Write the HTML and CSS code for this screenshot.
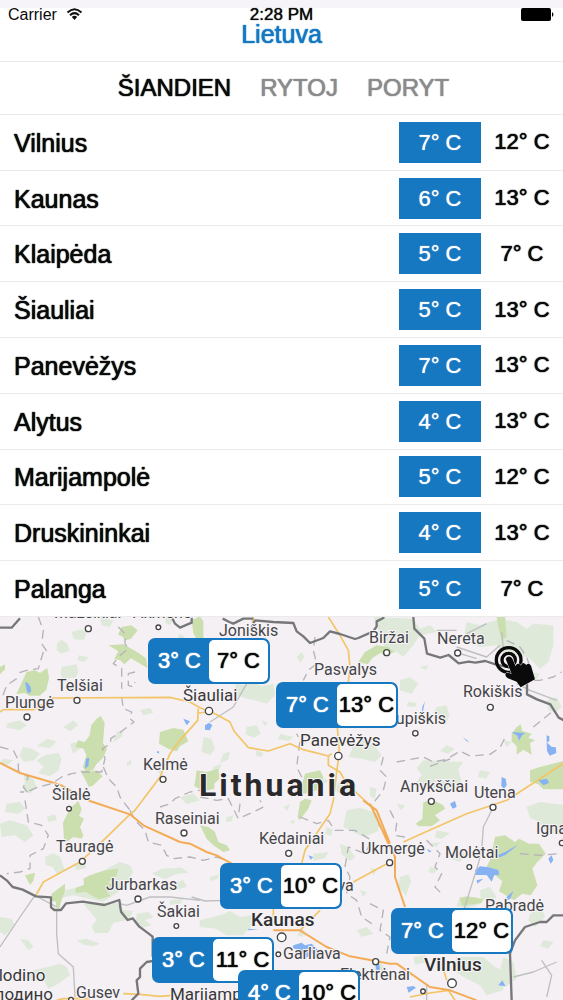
FILE: index.html
```html
<!DOCTYPE html>
<html lang="lt">
<head>
    <meta charset="UTF-8">
    <meta name="viewport" content="width=device-width, initial-scale=1.0">
    <title>Orai - Lietuva</title>
    <link rel="stylesheet" href="styles.css">
</head>
<body>
    <header>
        <div class="status-bar">
            <span class="carrier">Carrier
                <svg class="wifi" viewBox="0 0 16 12" aria-hidden="true">
                    <path d="M1 4.500Q8 -2 15 4.500M3.500 7.200Q8 3 12.500 7.200" />
                    <path class="wifi-dot" d="M5.300 9Q8 6.500 10.700 9L8 12z" />
                </svg>
            </span>
            <time>2:28 PM</time>
            <svg class="battery" viewBox="0 0 34 13" aria-hidden="true">
                <rect x="0" y="0" width="30" height="13" rx="2" />
                <path d="M31 4q3 2.500 0 5z" />
            </svg>
        </div>
        <h1>Lietuva</h1>
    </header>

    <nav>
        <a class="active" href="#siandien">ŠIANDIEN</a>
        <a href="#rytoj">RYTOJ</a>
        <a href="#poryt">PORYT</a>
    </nav>

    <table class="cities">
        <tbody>
            <tr><th scope="row">Vilnius</th><td><span class="min">7° C</span></td><td>12° C</td></tr>
            <tr><th scope="row">Kaunas</th><td><span class="min">6° C</span></td><td>13° C</td></tr>
            <tr><th scope="row">Klaipėda</th><td><span class="min">5° C</span></td><td>7° C</td></tr>
            <tr><th scope="row">Šiauliai</th><td><span class="min">5° C</span></td><td>13° C</td></tr>
            <tr><th scope="row">Panevėžys</th><td><span class="min">7° C</span></td><td>13° C</td></tr>
            <tr><th scope="row">Alytus</th><td><span class="min">4° C</span></td><td>13° C</td></tr>
            <tr><th scope="row">Marijampolė</th><td><span class="min">5° C</span></td><td>12° C</td></tr>
            <tr><th scope="row">Druskininkai</th><td><span class="min">4° C</span></td><td>13° C</td></tr>
            <tr><th scope="row">Palanga</th><td><span class="min">5° C</span></td><td>7° C</td></tr>
        </tbody>
    </table>

    <main class="map">
        <!-- Terrain is drawn at three units per pixel -->
        <svg class="terrain" viewBox="0 20 1689 1150" preserveAspectRatio="xMinYMin slice" aria-hidden="true">
            <g class="meadow">
                <path d="M215 65l30-8 15 10-8 22-30-2zM170 100l15-12 18 12 5 22-25 8-12-10zM235 135l30 5-12 15-20-5zM185 170l45-8 5 25-8 15-40 3-5-15zM20 340l40-10 20 15-20 15-40-8zM70 410l25 5 25 15-18 20-30 5-15-20zM140 385l30 8-20 20-40-5zM10 445l30 5-20 15-25-3zM110 450l25-15 40-8 10 20-10 35-25 15-35-8 15-20zM190 350l30-20 15 15-25 18zM210 400l20-5 10 20-20 15zM70 490l30 15 10 25-20 20-20-8 5-25z" />
                <path d="M420 300l30-8 10 15-30 8zM350 365l20-5-5 20-25 15zM380 455l12-6 3 12-14 5zM300 20l40 10-10 20-25-5zM540 70l15 10-10 15-15-5zM500 10l20 15-10 20-15-8zM480 470l15 5-10 15-12-3zM540 560l40-10 20 20-40 12zM555 120l12 10-5 10z" />
                <path d="M705 220l30 5 20-12 30 15 35-8 5 35-25 25-35-10-25-5-30-10zM890 140l15-15 8 15-12 18zM610 380l25 5 10 30-15 20-25-10zM740 350l30-5 12 25-20 12-25-10zM785 330l18 8-8 10zM840 370l40 10-15 12-30-5zM670 430l20-8-5 25-25 12zM640 470l25-10-10 25-20 5zM770 420l20 8-5 12-18-5zM1060 400l40-15 30 30 15 20-20 20-40-10-40-5 10-20zM960 500l25 10-15 15-20-5zM1010 520l40-10 20 20-30 25-30-10zM1110 530l20 5-5 30-15-8z" />
                <path d="M1120 20l120 5 20 30 30-10 20 20-50 10-20 30-30 35-20-15-30 5-20-60zM1200 210l30-10 25 20-20 30-35-10zM1260 170l25-5-8 15zM1310 290l30-5 8 30-12 30-20-8-20-22zM1225 275l25 3-5 12-25-3zM1400 35l40 10 60-20 50 10 30 20 20-15 60 5v60l-15 50-25 20-30-30-30-10-50-5-20-25-50 5-50-20zM1590 185l30 5-15 20zM1640 270l30-10 15 30-20 18-20-8zM1340 405l25 10-20 15-25-8zM1270 450l120 5-15 20 10 40-20 20-50 3-30-15-40 0 20-30-15-20zM1440 480l30 5-12 20-25-5zM1510 390l25 5-15 15zM1180 260l15-5-5 20z" />
                <path d="M20 580l40-5 15 20-20 15-40-5zM0 640l30-10 50 15 20 30-25 20-30-20-40 5zM140 620l25-8 5 18-25 5zM135 740l25-12 20 12 15 40-25 10-12-20-20-5zM220 760l30-3 10 15-30 8zM320 775l40-20 30 10 10 20-30 50-60 40-90-20-50 10 5-20 60-15 60-5 30-20zM250 880l100-2 20 20 30 5-15 25-45 10-15 30-40 0-10-20 15-20zM230 990l30-5 40 15-20 8-30-5zM0 920l35 5 10 20-30 30-15-10zM60 985l25 5 15 20-15 10zM80 1085l60-15 40-10 20 10 10 25-35 25-30 15-10-20-50-5zM410 910l35-5 15 15-25 10 20 15-30 8-20-10zM455 790l30-15 60-3 20 15-40 5-30 15zM480 830l70-20 10 20-60 15zM510 870l40-5-10 15-30 3z" />
                <path d="M600 930l70-18 20-10 30 18 35-5 8 25-35 35-50 0-30-20-50-5zM680 780l30-5-5 15zM630 800l30-8-10 15-20 5zM680 620l20-5-5 18-18 3zM850 590l20-8-8 20zM870 635l15-8-5 15zM980 650l18 8-5 18-18-5zM940 730l45-5-10 18-35 8zM1020 700l25 10 20 30-15 12-25-20zM1000 850l25 5-10 20-20-5zM1080 840l20 5-10 15zM1040 600l40-8 60 20-5 50-45 18-60-30zM1070 960l30-10 20 20-35 10zM600 1010l30 5-20 15-25-8zM900 955l15 5-8 20-15-5zM1110 770l20 10-10 15z" />
                <path d="M1190 580l25 5-12 15zM1580 590l40-15 70 8v90l-45-5-30-35-25-10zM1200 800l25-8 8 20-15 45-12-15-12-15zM1290 700l30-5-10 15zM1290 770l25 5-15 15-15-5zM1310 660l40 8-25 18-20-5zM1360 720l25-5 10 20-15 20-25-8zM1440 840l30-10 20 30-18 15-30-12zM1380 860l50 0 10 20-40 15-30-8zM1590 910l35-20 10 30-30 30-20-20zM1510 1040l30 15 10 50-35 25-20-30zM1240 1040l35-5 5 20-35 8zM1370 1040l80 0 35 30 25 10v60l-50 15-20-30-50-25-30-20zM1130 1050l25 20-12 20-25-10zM1630 990l30 5-15 20-25-8z" />
            </g>
            <g class="forest">
                <path d="M80 185l25-5 15 8 22-15 5 30-8 35-20 18-30 0-15-8-25 3 12-25zM0 170l15-8 0 15-15 15zM365 50l28-5 20 15-20 25-15 5-12-12-12-5zM325 105l45-3 40 22 28 20 5 30-50-30-20 18-12-12-18-5 12-22zM290 325l12-8 12 20-5 60 12 20-12 25-20 20-10 18-22 5-8-15 10-35-8-20-25-5 8-20 20 5 15-20 5-30zM240 480l25 5 25-5 18 18-30 28-12 3-12-25zM480 365l40-12 30 5 15 35-25 15-10 15-25-8-28-15zM575 30l25-12 10 15 0 50-20 5-10-20z" />
                <path d="M590 480l30 5 35-10 3 30-15 15 0 15-30 8-30-15zM915 490l45-10 10 20-20 40-25 8-35 5-5-12 20-15zM1075 155l20-30 35-20 35 5 18 15-30 12-10-10-25 15-15 20z" />
                <path d="M1535 370l15-20 12-8 5 20 28 8-10 12 20 8-15 8 5 35-25-15-20 15 0-25-15-15zM1590 480l30-10 70-18v85l-60 0-15-15-25-8zM1270 575l30-5 30 15 5 10-30 20 15 15-25 18-40 0-8-8 20-15zM1490 20l25 0 5 60-15 10-10-40z" />
                <path d="M200 615l15-25 20-18 10 25-8 20 15 8-12 25 10 25-5 10-25-5-20 15-8-8-3-50zM75 795l30-8-5 25-10 12zM155 850l40-30 0 20-12 35-5 20-10-5 0-15-15-5zM250 805l20-10 45-15 40-5-5 20-25 20 15 15-20 15 12 12-35 10-20-10-20-12-30 3 0-15 25-10zM600 645l25 5 20 15 10 30 25 10 10 15-20 5-30-20-20-20z" />
                <path d="M900 575l15-10 20 5-10 25-15 20-12 15-5-10zM1470 750l15-70 30-5 30 20 12-10 30 15 30 0 20 30-25 25-15 20 15 50-20 30-25-5-25 20-20-12-25-15 10-30-30-25-25-5zM1380 863l20-5 50 8-5 12-60 8z" />
            </g>
            <g class="water">
                <path d="M75 215l8 3 8 10 3 15-8 7-6-10zM258 445l10-3-3 25-10 8zM615 345l12-8 10 8-8 15-14-2zM550 325l20 8-10 12zM468 425l8-3 2 8zM1025 215l12 0-5 10zM1275 272l-6 30-4 10 2-22zM1388 380l20 15-8-2zM1535 365l40 3-10 8-8 15-5-15zM1640 375l8 3 0 15-8 3zM1640 395l15 15 12 0 2 18-20 8-8-15zM1505 500l12 5 3 20-8 10-8-8zM1615 510l25-5 8 12-18 8zM1350 580l15-8 5 18-12 5zM880 1005l25-8 10 8 20-5 25 25-2 15-20-10-20 12-20-20-20-10zM925 735l15 5-8 8zM745 955l30 3-30 2zM1425 780l15-12 25 3 30 8 3 15-15 0-8 20-15-20-35 0zM1430 810l20-5-18 15zM1515 725l40-22-38 30-18 8-10-5zM1645 745l10-10 5 15-8 10zM1520 860l20-18-10 25-12 3zM1495 1125l12-15 10 18zM1220 1130l20-3 8 5-22 15zM1125 1055l12 3 3 18-10 8zM1280 715l15 8-8 3zM1130 1140l8 5z" />
            </g>
            <g class="dashes">
                <path d="M115 20l15 40-5 40 20 30M130 125l-15 50-35 5-30 10M50 205l-30 20-15 40M355 50l20 20 0 30 10 15-30 25-15 20 25 15 0 60M405 185l-20 5 0 35 15 5 5-15M365 260l5 35 25 10-5 20 12 10-40 30-30 20 0 15-25 15 8 30-10 40-30 0-30 0-30 5-30 10 -30 20-40 10-35 15-20 0M0 410l40 10 15 30 0 30 30 20-15 30 20 25M310 470l15 35 25 25 10 30 30 40M480 590l30-10 15-15 45-20 30-5" />
                <path d="M600 560l50 10 35-5 30 60 45-20 30-15-10-20M720 580l-5 40M900 620l50 20 35-10 20 30 60 0 50 30-20 40-50-20-10 60 15 30-10 50 30 20 15 50 30 20M890 540l15-40-15-30 10-80-10-20M945 80l-5 40 10 40-25 20-15 30M1150 440l-10 40 20 20-10 40-40 50M1190 455l80-15 30 15 40-8 40-25 30 15 60-5 30-20 15-30M1290 468l60-22" />
                <path d="M75 570l10 65 40 10 20 30-15 40-40 20 0 40-30 10-40 5M390 600l15 30 30 30 10 35 40 10 15 30 20 10 50-5 40 10 40-10 30 10M1170 600l20 40-5 35 30 5M1280 690l40 40-15 40 20 20-20 40 20 20M1120 600l20 50M1520 90l40 20 20 30 20 60M1560 210l60 0 40-10 25-15M1600 350l25-20 30-25M1560 730l60 5 60-5M1110 880l40 20-10 60 30 20-10 50" />
            </g>
            <g class="minor-road">
                <path d="M170 900l0 70 5 60 45 40 5 90M0 1010l60-90 45-65 65 35M360 880l20 5 70-25 60 0 90 10M575 860l40 12 60-2M740 220l-40 70-70 45M1370 110l90 30 40-35M1380 130l50 15M1505 65l5 50M1550 220l40 20 80 30M1370 60l-60 0M1460 40l-60 30M1560 220l30-10M1480 590l-30 60-5 70-10 40-50 160M1280 1120l0 50M1540 1100l60-15 70-30M1625 1050l30 45-15 65" />
            </g>
            <g class="road">
                <path d="M0 305L10 298L100 298L160 263L510 261L570 275L600 292L645 310L690 335L702 362L745 412L805 422L870 400L910 418L985 437L985 465L1020 485L1040 520L1115 590" />
                <path d="M595 295L593 330L540 390L510 430L480 500L405 600L390 612L310 690L240 755L130 815L105 860M632 305L592 308" />
                <path d="M760 20L757 38M985 20L1020 75L1045 120L1050 170L1045 215M1012 350L1018 425L1010 485L1000 570L990 610L915 720L905 760M995 430L985 437" />
                <path d="M1060 815L1170 755M1210 695L1310 650L1400 610L1520 570L1689 460M820 895L820 925M900 960L960 900M370 1150L420 1152L480 1158L580 1150M170 1170L190 1165L270 1165M690 1160L710 1140M1345 1140L1290 1148L1230 1160M1345 1140L1365 1170M1330 1075L1340 1110" />
            </g>
            <g class="highway">
                <path d="M0 458L60 488L180 523L200 535L270 572L390 612L430 645L540 695L570 700L620 725L650 735L695 760M820 960L900 960L980 1010L1050 1038L1170 1060L1190 1060L1290 1130L1350 1140L1430 1170M1090 570L1130 600L1170 700M1110 580L1170 710L1185 740L1185 800L1215 890" />
            </g>
            <g class="border">
                <path d="M0 52l35 0 25-28M515 20l10 20 15 12 35-15 0-15M668 25l20 10 12 5 30-15 30 0M755 50l10-20 55 5 60 3 10 25 20 15 20 20 40-15 20-20 30 8 45 15 10-3 45-20 10-15 0-15 20-10 5-25M1240 20l3 35 30 30 8 45 40 12 25-8 30 25 30-5 20 3 30-5 30 10 45 10 30 25 20 15 0 40 30 15 40 15 25 40 20 10" />
                <path d="M0 795l20 15 18 20 30 8 40 20 45 3 0 30 10 8 20 0 15-20 50-5 65 10 45-15 5 35 20 25 15-5 20 25 40 30 0 60M470 1050l-30 5-20 20 0 25-10 10 5 40-20 20M1535 1170l-5-140 15-40 30-40 45-15 20 0 20-20 30 0" />
            </g>
            <g class="towns">
                <circle cx="265" cy="55" r="9" /><circle cx="475" cy="51" r="7" /><circle cx="231" cy="270" r="9" /><circle cx="81" cy="320" r="9" /><circle cx="489" cy="507" r="9" /><circle cx="207" cy="595" r="7" /><circle cx="627" cy="302" r="11" /><circle cx="1015" cy="437" r="11" /><circle cx="1160" cy="127" r="9" /><circle cx="1373" cy="128" r="9" /><circle cx="1471" cy="291" r="9" /><circle cx="1246" cy="369" r="8" /><circle cx="1294" cy="573" r="9" /><circle cx="1479" cy="591" r="9" /><circle cx="552" cy="668" r="9" /><circle cx="247" cy="753" r="9" /><circle cx="414" cy="866" r="9" /><circle cx="529" cy="947" r="7" /><circle cx="866" cy="729" r="9" /><circle cx="1169" cy="757" r="9" /><circle cx="1408" cy="770" r="7" /><circle cx="1686" cy="698" r="8" /><circle cx="845" cy="981" r="13" /><circle cx="835" cy="1032" r="7" /><circle cx="1127" cy="1054" r="9" /><circle cx="1269" cy="1143" r="7" /><circle cx="1356" cy="1119" r="13" /><circle cx="213" cy="1168" r="7" />
            </g>
        </svg>

        <svg class="names" viewBox="0 617 563 383" preserveAspectRatio="xMinYMin slice">
            <text x="54" y="618">Mažeikiai</text>
            <text x="133" y="618">Akmenė</text>
            <text x="57" y="691">Telšiai</text>
            <text x="5" y="708">Plungė</text>
            <text x="143" y="770">Kelmė</text>
            <text x="52" y="800">Šilalė</text>
            <text x="219" y="636">Joniškis</text>
            <text x="314" y="675">Pasvalys</text>
            <text x="369" y="643">Biržai</text>
            <text x="437" y="644">Nereta</text>
            <text x="463" y="697">Rokiškis</text>
            <text x="386" y="724">Kupiškis</text>
            <text x="400" y="792">Anykščiai</text>
            <text x="474" y="798">Utena</text>
            <text x="155" y="824">Raseiniai</text>
            <text x="56" y="852">Tauragė</text>
            <text x="106" y="890">Jurbarkas</text>
            <text x="157" y="917">Šakiai</text>
            <text x="259" y="844">Kėdainiai</text>
            <text x="361" y="854">Ukmergė</text>
            <text x="445" y="858">Molėtai</text>
            <text x="536" y="834">Ignalina</text>
            <text x="485" y="911">Pabradė</text>
            <text x="302" y="891">Jonava</text>
            <text x="283" y="959">Garliava</text>
            <text x="340" y="980">Elektrėnai</text>
            <text x="76" y="998">Gusev</text>
            <text class="large" x="-11" y="981">olodino</text>
            <text class="large" x="-15" y="1000">олодино</text>
            <text class="large" x="170" y="1000">Marijampolė</text>
            <text class="large" x="183" y="701">Šiauliai</text>
            <text class="large" x="300" y="746">Panevėžys</text>
            <text class="capital" x="251" y="926">Kaunas</text>
            <text class="capital" x="424" y="971">Vilnius</text>
            <text class="country" x="199" y="796">Lithuania</text>
        </svg>

        <a class="pin pin-siauliai" href="#siauliai"><span>3° C</span><span>7° C</span></a>
        <a class="pin pin-panevezys" href="#panevezys"><span>7° C</span><span>13° C</span></a>
        <a class="pin pin-kaunas" href="#kaunas"><span>3° C</span><span>10° C</span></a>
        <a class="pin pin-vilnius" href="#vilnius"><span>7° C</span><span>12° C</span></a>
        <a class="pin pin-marijampole" href="#marijampole"><span>3° C</span><span>11° C</span></a>
        <a class="pin pin-alytus" href="#alytus"><span>4° C</span><span>10° C</span></a>

        <button class="touch" type="button" aria-label="Žemėlapis">
            <svg viewBox="0 0 150 150">
                <circle class="ring" cx="56" cy="60" r="37" />
                <circle class="ring" cx="56" cy="60" r="20" />
                <path class="hand" d="M47 57Q54 44 66 54L77 79Q79 67 89 73L93 77Q95 65 105 71L109 75Q116 66 123 77L135 118L92 142L80 125L52 114Q41 104 50 98L65 101z" />
            </svg>
        </button>
    </main>
</body>
</html>
```
FILE: styles.css
```css
* {
    box-sizing: border-box;
}

body {
    margin: 0;
    height: 100vh;
    display: flex;
    flex-direction: column;
    overflow: hidden;
    font-family: "Liberation Sans", Arial, sans-serif;
    background-color: #fff;
    color: #0a0a0a;
}

header {
    border-top: 8px solid #f6f4f8;
    border-bottom: 1px solid #ebebeb;
    padding-bottom: 13px;
}

.status-bar {
    display: grid;
    grid-template-columns: 1fr auto 1fr;
    align-items: center;
    height: 12px;
    padding: 0 8px;
    font-size: 16px;
    line-height: 12px;
}

.status-bar time {
    font-size: 17px;
    text-shadow: 0 0 1px #0a0a0a;
}

.wifi {
    width: 17px;
    height: 12px;
    margin-left: 5px;
    fill: none;
    stroke: #111;
    stroke-width: 2;
}

.wifi-dot {
    fill: #111;
    stroke: none;
}

.battery {
    width: 34px;
    height: 13px;
    justify-self: end;
}

h1 {
    margin: 0;
    font-size: 25px;
    font-weight: normal;
    line-height: 28px;
    text-align: center;
    color: #1778c2;
    text-shadow: 0 0 1px #1778c2, 0 0 1px #1778c2;
}

nav {
    display: flex;
    justify-content: center;
    align-items: center;
    gap: 29px;
    height: 53px;
    padding-left: 4px;
    border-bottom: 1px solid #ebebeb;
}

nav a {
    font-size: 24px;
    color: #8b8b8d;
    text-decoration: none;
    text-shadow: 0 0 1px currentColor, 0 0 1px currentColor;
}

nav a.active {
    color: #0a0a0a;
}

.cities {
    width: 100%;
    height: 502px;
    border-collapse: collapse;
    table-layout: fixed;
    text-shadow: 0 0 1px currentColor, 0 0 1px currentColor;
}

.cities tr {
    border-bottom: 1px solid #ebebeb;
}

.cities th {
    padding: 2px 0 0 14px;
    font-size: 25px;
    font-weight: normal;
    text-align: left;
}

.cities td {
    width: 82px;
    padding: 0;
    font-size: 22px;
    text-align: center;
}

.min {
    display: block;
    height: 41px;
    line-height: 41px;
    background-color: #1778c2;
    color: #fff;
    text-shadow: 0 0 1px currentColor;
}

/* Map */
.map {
    flex: 1;
    position: relative;
    overflow: hidden;
    background-color: #f4f0f4;
}

.terrain,
.names {
    position: absolute;
    top: 0;
    left: 0;
    width: 100%;
    height: 100%;
}

.meadow {
    fill: #dfe9da;
}

.forest {
    fill: #cbdeae;
}

.water {
    fill: #86b2f3;
}

.dashes,
.minor-road,
.road,
.highway,
.border {
    fill: none;
    stroke-linejoin: round;
}

.dashes {
    stroke: #b5b3b8;
    stroke-width: 4;
    stroke-dasharray: 26 16;
}

.minor-road {
    stroke: #bfbfc0;
    stroke-width: 4;
}

.road {
    stroke: #f3c566;
    stroke-width: 5;
}

.highway {
    stroke: #f4ab55;
    stroke-width: 6;
}

.border {
    stroke: #77777a;
    stroke-width: 7;
}

.towns {
    fill: #fff;
    stroke: #444;
    stroke-width: 4;
}

.names text {
    font-family: Roboto, sans-serif;
    font-size: 16px;
    fill: #454548;
    stroke: #f7f4f7;
    stroke-width: 2px;
    paint-order: stroke;
}

.names .large {
    font-size: 17px;
    fill: #38383a;
}

.names .capital {
    font-size: 19px;
    font-weight: 500;
    fill: #303033;
}

.names .country {
    font-size: 32px;
    font-weight: bold;
    letter-spacing: 3px;
    fill: #29292b;
}

.pin {
    position: absolute;
    display: grid;
    grid-template-columns: 1fr 1fr;
    width: 122px;
    height: 46px;
    border: 2px solid #1778c2;
    border-radius: 7px;
    overflow: hidden;
    background-color: #1778c2;
    color: #fff;
    font-size: 22px;
    line-height: 42px;
    text-align: center;
    text-decoration: none;
    white-space: nowrap;
    text-shadow: 0 0 1px currentColor, 0 0 1px currentColor;
}

.pin span + span {
    border-radius: 5px;
    background-color: #fff;
    color: #0a0a0a;
}

.pin-siauliai {
    left: 148px;
    top: 21px;
}

.pin-panevezys {
    left: 276px;
    top: 65px;
}

.pin-kaunas {
    left: 220px;
    top: 246px;
}

.pin-vilnius {
    left: 391px;
    top: 291px;
}

.pin-marijampole {
    left: 152px;
    top: 320px;
}

.pin-alytus {
    left: 238px;
    top: 353px;
}

.touch {
    position: absolute;
    left: 490px;
    top: 23px;
    width: 50px;
    height: 50px;
    padding: 0;
    border: 0;
    background: none;
    cursor: pointer;
}

.touch svg {
    display: block;
}

.ring {
    fill: none;
    stroke: #0a0a0a;
    stroke-width: 10;
}

.hand {
    fill: #0a0a0a;
    stroke: #f4f0f4;
    stroke-width: 3;
    paint-order: stroke;
}
```
